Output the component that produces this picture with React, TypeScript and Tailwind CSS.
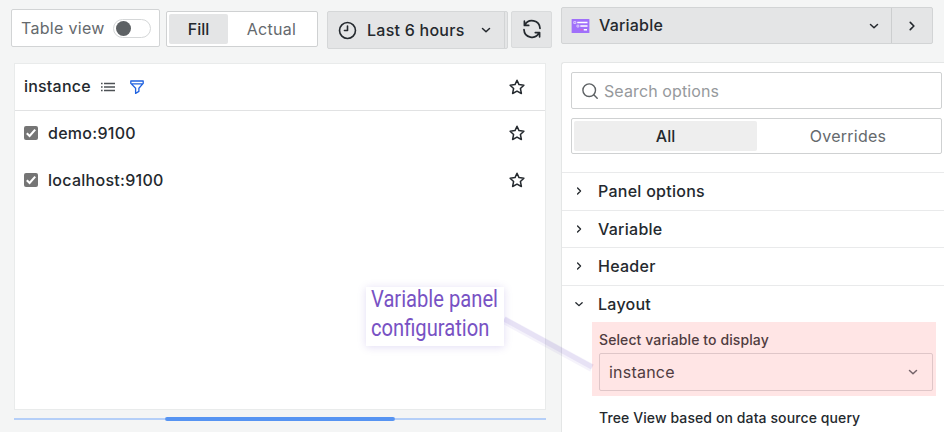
import type { ReactNode } from "react";

const Chevron = ({ dir = "down", className = "" }: { dir?: "down" | "right"; className?: string }) => (
  <svg viewBox="0 0 10 10" fill="none" stroke="currentColor" strokeWidth="1.5" strokeLinecap="round" strokeLinejoin="round" className={`size-[10px] shrink-0 ${className}`}>
    <path d={dir === "down" ? "M1.5 3.5 5 6.8 8.5 3.5" : "M3.4 1.7 6.7 5 3.4 8.3"} />
  </svg>
);

const Star = () => (
  <svg viewBox="0 0 16 16" fill="none" stroke="#24292e" strokeWidth="1.5" strokeLinejoin="round" className="size-4 shrink-0">
    <path d="M8 1.2 10 5.6 14.9 6.2 11.4 9.5 12.4 14.5 8 12.1 3.6 14.5 4.6 9.5 1.1 6.2 6 5.6Z" />
  </svg>
);

const CheckBox = () => (
  <span className="flex size-[14px] shrink-0 items-center justify-center rounded-[2px] bg-[#757575]">
    <svg viewBox="0 0 14 14" fill="none" stroke="white" strokeWidth="2.1" className="size-[14px]">
      <path d="M2.8 7.3 5.6 10 11.2 3.6" />
    </svg>
  </span>
);

const Row = ({ label }: { label: string }) => (
  <div className="flex h-[46.5px] items-center pl-[9px] pr-5">
    <CheckBox />
    <span className="ml-[10px] flex-1 text-[16px] tracking-[0.28px]">{label}</span>
    <Star />
  </div>
);

const Section = ({ title, open = false, children }: { title: string; open?: boolean; children?: ReactNode }) => (
  <div className="border-t border-[#e9eaeb]">
    <div className="flex h-[36.5px] items-center pl-[11.5px]">
      <Chevron dir={open ? "down" : "right"} className="scale-90" />
      <span className="ml-[14.5px] text-[16px] font-medium tracking-[0.26px]">{title}</span>
    </div>
    {children}
  </div>
);

export default function App() {
  return (
    <div className="relative flex h-[432px] w-[944px] overflow-hidden bg-[#f4f5f5] font-['Inter',sans-serif] text-[#24292e]">
      <div className="flex w-[561px] shrink-0 flex-col">
        <div className="flex h-[63px] items-start pl-[11px] pt-[9px]">
          <div className="flex h-[38px] w-[149px] items-center rounded-[2px] border border-[#d2d4d5] bg-white pl-[9px] text-[16px] tracking-[0.3px] text-[#65696d]">
            Table view
            <span className="ml-[8px] flex h-[19px] w-[38px] items-center rounded-full border border-[#d5d7d8] pl-[2px]">
              <span className="size-[15px] rounded-full bg-[#5d6164]" />
            </span>
          </div>
          <div className="ml-[6px] mt-[2px] flex h-[36px] w-[152px] rounded-[2px] border border-[#cfd1d2] bg-white p-[2px] text-[16px]">
            <span className="flex w-[59px] items-center justify-center rounded-[2px] bg-[#e4e5e6] font-medium">Fill</span>
            <span className="flex flex-1 items-center justify-center tracking-[0.3px] text-[#65696d]">Actual</span>
          </div>
          <div className="ml-[9px] mt-[2px] flex h-[38px] w-[181px] items-center rounded-[2px] border border-[#d5d7d8] bg-[#e4e5e6] pl-[10px]">
            <svg viewBox="0 0 20 20" fill="none" stroke="currentColor" strokeWidth="1.7" strokeLinecap="round" strokeLinejoin="round" className="size-[19px]">
              <circle cx="10" cy="10" r="8.4" />
              <path d="M10 5.3V10H6.8" />
            </svg>
            <span className="ml-[10px] text-[16px] font-medium tracking-[0.25px]">Last 6 hours</span>
            <Chevron className="ml-[16px]" />
            <span className="ml-auto mr-[2px] h-full w-px bg-[#d2d4d5]" />
          </div>
          <div className="ml-[3px] mt-[2px] flex h-[37px] w-[41px] items-center justify-center rounded-[2px] border border-[#d9dbdc] bg-[#e4e5e6]">
            <svg viewBox="0 0 20 20" fill="none" stroke="currentColor" strokeWidth="1.7" strokeLinecap="round" strokeLinejoin="round" className="-mt-px size-5">
              <path d="M2.4 2.2V6.4H6.7M2.8 6.3A8 8 0 0 1 18 9.4M17.6 17.8V13.6H13.3M17.2 13.7A8 8 0 0 1 2 10.6" />
            </svg>
          </div>
        </div>
        <div className="ml-[14px] h-[347px] w-[532px] border border-[#e9ebeb] bg-white font-medium">
          <div className="flex h-[47px] items-center border-b border-[#e1e2e3] pl-[9px] pr-5">
            <span className="-mt-[3px] text-[16px] tracking-[0.2px]">instance</span>
            <svg viewBox="0 0 14 10" stroke="#4d5155" strokeWidth="1.3" className="ml-[10px] h-[10px] w-[14px]">
              <path d="M0 1.5H1.6M3 1.5H14M0 5H1.6M3 5H14M0 8.5H1.6M3 8.5H14" />
            </svg>
            <svg viewBox="0 0 14 14" fill="none" stroke="#1f62e0" strokeWidth="1.3" strokeLinejoin="round" className="ml-[15px] size-[14px]">
              <path d="M.8 1H13.2V3.4L8.9 8.3V11.4L5.6 13.4V8.3L.8 3.4ZM.9 3.8H13" />
            </svg>
            <span className="ml-auto flex"><Star /></span>
          </div>
          <div className="-mt-[1px]">
            <Row label="demo:9100" />
            <Row label="localhost:9100" />
          </div>
        </div>
        <div className="ml-[14px] mt-[6px] flex h-[6px] w-[532px] items-center">
          <span className="h-[2px] w-[151px] bg-[#b5cff8]" />
          <span className="h-[4px] w-[230px] rounded-full bg-[#5794f2]" />
          <span className="h-[2px] flex-1 bg-[#b5cff8]" />
        </div>
      </div>

      <div className="flex w-[383px] flex-col pt-[7px]">
        <div className="flex h-[37px] w-[372px] rounded-[2px] border border-[#d2d4d5] bg-[#e4e5e6]">
          <div className="flex flex-1 items-center pl-[9px] pr-[12px]">
            <svg viewBox="0 0 19 15" className="h-[14px] w-[19px]">
              <rect width="19" height="15" fill="#a070fa" />
              <path d="M6 3.8H17M9.3 7.5H17M13 11.5H16.5" stroke="white" strokeWidth="1.5" />
              <path d="M2.3 2.8H4.5V4.8H2.3ZM5.7 6.6H7.7V8.6H5.7Z" fill="none" stroke="#e3d6ff" strokeWidth=".9" />
              <path d="M9.5 11.5H12" stroke="#d85cc9" strokeWidth="1.5" />
            </svg>
            <span className="-mt-px ml-[9px] text-[16px] font-medium tracking-[0.2px]">Variable</span>
            <Chevron className="ml-auto" />
          </div>
          <div className="flex w-[41px] items-center justify-center border-l border-[#cccecf]">
            <Chevron dir="right" className="scale-110" />
          </div>
        </div>
        <div className="mt-[18px] flex h-[370px] flex-col rounded-tl-[3px] border-l border-t border-[#e4e6e6] bg-white">
          <div className="ml-[9px] mt-[9px] flex h-[37px] w-[371px] items-center rounded-[2px] border border-[#cfd1d2] pl-[10px] text-[16px] tracking-[0.1px] text-[#96999c]">
            <svg viewBox="0 0 16 16" fill="none" stroke="#5d6164" strokeWidth="1.4" strokeLinecap="round" className="mr-[6px] size-4">
              <circle cx="7.2" cy="7.2" r="6.3" />
              <path d="m11.8 11.8 3.4 3.4" />
            </svg>
            Search options
          </div>
          <div className="ml-[9px] mt-[9px] flex h-[36px] w-[371px] rounded-[2px] border border-[#cfd1d2] p-[2px] text-[16px]">
            <span className="flex w-[183px] items-center justify-center rounded-[2px] bg-[#eeeeee] font-medium">All</span>
            <span className="flex flex-1 items-center justify-center tracking-[0.25px] text-[#65696d]">Overrides</span>
          </div>
          <div className="mt-[18px]">
            <Section title="Panel options" />
            <Section title="Variable" />
            <Section title="Header" />
            <Section title="Layout" open>
              <div className="ml-[30px] h-[74px] w-[344px] bg-[#ffe5e5] px-[7px] pt-[8px] text-[#503c40]">
                <div className="h-[23px] text-[14px] font-medium leading-[20px] tracking-[0.1px]">Select variable to display</div>
                <div className="flex h-[38px] w-[334px] items-center rounded-[2px] border border-[#dfc6c8] pl-[9px] pr-[14px] text-[16px] tracking-[0.22px]">
                  instance
                  <Chevron className="ml-auto text-[#75646a]" />
                </div>
              </div>
              <div className="ml-[37px] mt-[12px] text-[14px] font-medium leading-[20px] tracking-[0.1px]">Tree View based on data source query</div>
            </Section>
          </div>
        </div>
      </div>

      <svg className="absolute left-[500px] top-[310px] h-[65px] w-[95px]" viewBox="0 0 95 65">
        <path d="M4 10 92 58" stroke="#785ac8" strokeOpacity=".07" strokeWidth="8" />
        <path d="M4 9 92 57" stroke="#785ac8" strokeOpacity=".11" strokeWidth="5" />
      </svg>
      <div className="absolute left-[366px] top-[287px] h-[59px] w-[138px] bg-white pl-[5px] shadow-[0_1px_8px_rgba(120,90,200,0.22)]">
        <div className="-mt-[2px] w-[170px] origin-left scale-x-[0.84] font-['Roboto',sans-serif] text-[24px] leading-[29px] text-[#7852c4]">
          Variable panel
          <br />
          configuration
        </div>
      </div>
    </div>
  );
}
